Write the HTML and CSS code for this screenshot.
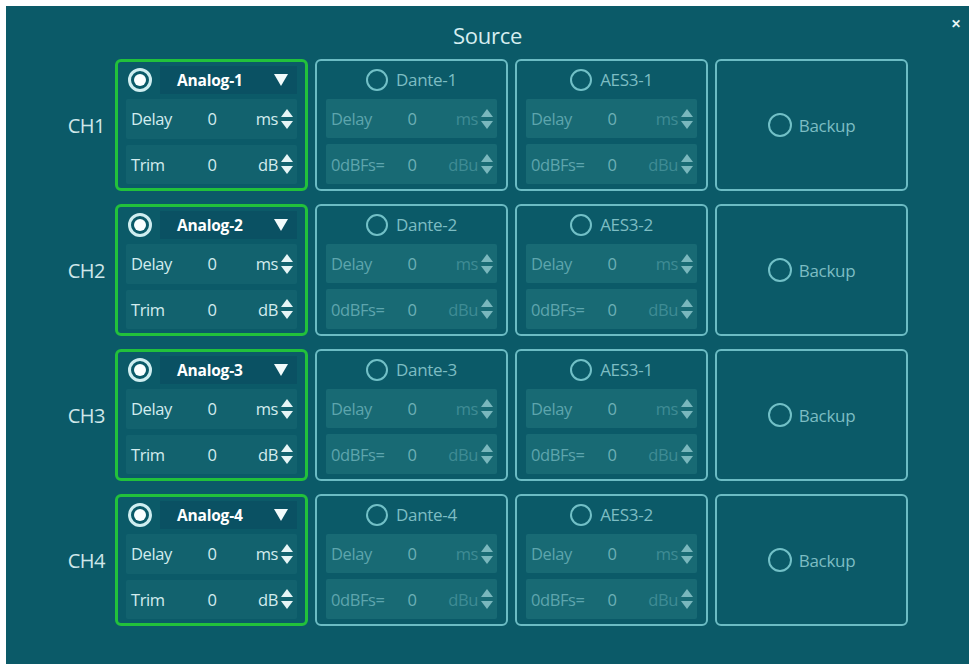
FILE: index.html
```html
<!DOCTYPE html>
<html lang="en">
<head>
    <meta charset="UTF-8">
    <meta name="viewport" content="width=device-width, initial-scale=1.0">
    <title>Source</title>
    <link rel="stylesheet" href="styles.css">
</head>
<body>
    <div class="panel">
        <div class="panel-header">
            <span class="title">Source</span>
            <span class="close">&#x2715;</span>
        </div>

        <div class="grid">
            <!-- CH1 -->
            <div class="ch">CH1</div>
            <div class="box active">
                <div class="head">
                    <span class="radio on"></span>
                    <div class="dropdown"><span>Analog-1</span><span class="caret"></span></div>
                </div>
                <div class="field"><span class="lbl">Delay</span><span class="val">0</span><span class="unit">ms</span><span class="spin"></span></div>
                <div class="field"><span class="lbl">Trim</span><span class="val">0</span><span class="unit">dB</span><span class="spin"></span></div>
            </div>
            <div class="box off">
                <div class="head centered"><span class="radio"></span><span class="name">Dante-1</span></div>
                <div class="field"><span class="lbl">Delay</span><span class="val">0</span><span class="unit">ms</span><span class="spin"></span></div>
                <div class="field"><span class="lbl">0dBFs=</span><span class="val">0</span><span class="unit">dBu</span><span class="spin"></span></div>
            </div>
            <div class="box off">
                <div class="head centered"><span class="radio"></span><span class="name">AES3-1</span></div>
                <div class="field"><span class="lbl">Delay</span><span class="val">0</span><span class="unit">ms</span><span class="spin"></span></div>
                <div class="field"><span class="lbl">0dBFs=</span><span class="val">0</span><span class="unit">dBu</span><span class="spin"></span></div>
            </div>
            <div class="box off backup"><span class="radio"></span><span class="name">Backup</span></div>

            <!-- CH2 -->
            <div class="ch">CH2</div>
            <div class="box active">
                <div class="head">
                    <span class="radio on"></span>
                    <div class="dropdown"><span>Analog-2</span><span class="caret"></span></div>
                </div>
                <div class="field"><span class="lbl">Delay</span><span class="val">0</span><span class="unit">ms</span><span class="spin"></span></div>
                <div class="field"><span class="lbl">Trim</span><span class="val">0</span><span class="unit">dB</span><span class="spin"></span></div>
            </div>
            <div class="box off">
                <div class="head centered"><span class="radio"></span><span class="name">Dante-2</span></div>
                <div class="field"><span class="lbl">Delay</span><span class="val">0</span><span class="unit">ms</span><span class="spin"></span></div>
                <div class="field"><span class="lbl">0dBFs=</span><span class="val">0</span><span class="unit">dBu</span><span class="spin"></span></div>
            </div>
            <div class="box off">
                <div class="head centered"><span class="radio"></span><span class="name">AES3-2</span></div>
                <div class="field"><span class="lbl">Delay</span><span class="val">0</span><span class="unit">ms</span><span class="spin"></span></div>
                <div class="field"><span class="lbl">0dBFs=</span><span class="val">0</span><span class="unit">dBu</span><span class="spin"></span></div>
            </div>
            <div class="box off backup"><span class="radio"></span><span class="name">Backup</span></div>

            <!-- CH3 -->
            <div class="ch">CH3</div>
            <div class="box active">
                <div class="head">
                    <span class="radio on"></span>
                    <div class="dropdown"><span>Analog-3</span><span class="caret"></span></div>
                </div>
                <div class="field"><span class="lbl">Delay</span><span class="val">0</span><span class="unit">ms</span><span class="spin"></span></div>
                <div class="field"><span class="lbl">Trim</span><span class="val">0</span><span class="unit">dB</span><span class="spin"></span></div>
            </div>
            <div class="box off">
                <div class="head centered"><span class="radio"></span><span class="name">Dante-3</span></div>
                <div class="field"><span class="lbl">Delay</span><span class="val">0</span><span class="unit">ms</span><span class="spin"></span></div>
                <div class="field"><span class="lbl">0dBFs=</span><span class="val">0</span><span class="unit">dBu</span><span class="spin"></span></div>
            </div>
            <div class="box off">
                <div class="head centered"><span class="radio"></span><span class="name">AES3-1</span></div>
                <div class="field"><span class="lbl">Delay</span><span class="val">0</span><span class="unit">ms</span><span class="spin"></span></div>
                <div class="field"><span class="lbl">0dBFs=</span><span class="val">0</span><span class="unit">dBu</span><span class="spin"></span></div>
            </div>
            <div class="box off backup"><span class="radio"></span><span class="name">Backup</span></div>

            <!-- CH4 -->
            <div class="ch">CH4</div>
            <div class="box active">
                <div class="head">
                    <span class="radio on"></span>
                    <div class="dropdown"><span>Analog-4</span><span class="caret"></span></div>
                </div>
                <div class="field"><span class="lbl">Delay</span><span class="val">0</span><span class="unit">ms</span><span class="spin"></span></div>
                <div class="field"><span class="lbl">Trim</span><span class="val">0</span><span class="unit">dB</span><span class="spin"></span></div>
            </div>
            <div class="box off">
                <div class="head centered"><span class="radio"></span><span class="name">Dante-4</span></div>
                <div class="field"><span class="lbl">Delay</span><span class="val">0</span><span class="unit">ms</span><span class="spin"></span></div>
                <div class="field"><span class="lbl">0dBFs=</span><span class="val">0</span><span class="unit">dBu</span><span class="spin"></span></div>
            </div>
            <div class="box off">
                <div class="head centered"><span class="radio"></span><span class="name">AES3-2</span></div>
                <div class="field"><span class="lbl">Delay</span><span class="val">0</span><span class="unit">ms</span><span class="spin"></span></div>
                <div class="field"><span class="lbl">0dBFs=</span><span class="val">0</span><span class="unit">dBu</span><span class="spin"></span></div>
            </div>
            <div class="box off backup"><span class="radio"></span><span class="name">Backup</span></div>
        </div>
    </div>
</body>
</html>
```

FILE: styles.css
```css
body {
    margin: 0;
    background: #fff;
    font-family: "Open Sans", "Noto Sans", sans-serif;
}
.panel {
    position: relative;
    margin: 6px 4px 0 6px;
    height: 658px;
    background: #0b5a68;
    color: #d3ecee;
}
.panel-header {
    height: 53px;
    padding-top: 5px;
    box-sizing: border-box;
    display: flex;
    align-items: center;
    justify-content: center;
}
.title {
    font-size: 22px;
    letter-spacing: -0.3px;
    color: #d6eef0;
}
.close {
    position: absolute;
    top: 9px;
    right: 8px;
    font-size: 12px;
    font-weight: bold;
    color: #eaf6f7;
}
.grid {
    display: grid;
    grid-template-columns: 102px repeat(4, 193px);
    grid-auto-rows: 132px;
    column-gap: 7px;
    row-gap: 13px;
}
.ch {
    display: flex;
    align-items: center;
    justify-content: flex-end;
    padding-right: 3px;
    font-size: 20px;
    letter-spacing: -0.5px;
    color: #cfe7e9;
}
.box {
    box-sizing: border-box;
    border-radius: 6px;
    display: flex;
    flex-direction: column;
    gap: 6px;
}
.box.active {
    border: 3px solid #22c13b;
    padding: 4px 8px;
}
.box.off {
    border: 2px solid #6cbcc4;
    padding: 5px 9px;
    color: #5ea5ad;
}
.head {
    height: 28px;
    display: flex;
    align-items: center;
    margin-bottom: -1px;
}
.head.centered {
    justify-content: center;
    gap: 8px;
}
.name {
    font-size: 17px;
    letter-spacing: -0.3px;
    color: #7dbdc3;
}
.radio {
    width: 22px;
    height: 22px;
    box-sizing: border-box;
    border: 2px solid #72c0c7;
    border-radius: 50%;
    flex-shrink: 0;
}
.radio.on {
    width: 24px;
    height: 24px;
    margin-left: 2px;
    border: 3px solid #cfeef0;
    display: flex;
    align-items: center;
    justify-content: center;
}
.radio.on::after {
    content: "";
    width: 12px;
    height: 12px;
    border-radius: 50%;
    background: #fbffff;
}
.dropdown {
    flex: 1;
    height: 28px;
    margin-left: 8px;
    background: #0a5163;
    display: flex;
    align-items: center;
    padding: 0 9px 0 17px;
    font-size: 15.5px;
    font-weight: bold;
    letter-spacing: -0.2px;
    color: #fff;
}
.caret {
    margin-left: auto;
    width: 0;
    height: 0;
    border-left: 7px solid transparent;
    border-right: 7px solid transparent;
    border-top: 12px solid #f2fbfc;
}
.field {
    height: 40px;
    display: grid;
    grid-template-columns: 66px 30px 1fr 14px;
    align-items: center;
    padding: 0 3px 0 5px;
    background: #12626e;
    border-radius: 2px;
    font-size: 16.5px;
    letter-spacing: -0.4px;
}
.val {
    text-align: center;
}
.unit {
    text-align: right;
    padding-right: 2px;
}
.spin {
    height: 24px;
    background: no-repeat center/14px 24px url("data:image/svg+xml,%3Csvg xmlns='http://www.w3.org/2000/svg' viewBox='0 0 14 24'%3E%3Cpath d='M1 10 L7 2 L13 10Z M1 14 L13 14 L7 22Z' fill='%23e6f5f6'/%3E%3C/svg%3E");
}
.box.off .field {
    background: #186a74;
}
.box.off .val {
    color: #6db0b6;
}
.box.off .unit {
    color: #3f8c94;
}
.box.off .spin {
    background-image: url("data:image/svg+xml,%3Csvg xmlns='http://www.w3.org/2000/svg' viewBox='0 0 14 24'%3E%3Cpath d='M1 10 L7 2 L13 10Z M1 14 L13 14 L7 22Z' fill='%2379b7bd'/%3E%3C/svg%3E");
}
.backup {
    flex-direction: row;
    align-items: center;
    justify-content: center;
    gap: 7px;
}
.backup .radio {
    width: 24px;
    height: 24px;
}
```
